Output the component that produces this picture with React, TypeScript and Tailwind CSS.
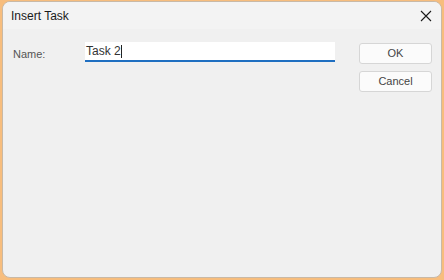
import React from "react";

export default function App() {
  return (
    <div className="w-[444px] h-[280px] bg-[#f7bd7d] pt-[1px] pl-[2px] pr-[2px] pb-[2px]" style={{ fontFamily: '"Liberation Sans", Arial, sans-serif' }}>
      <div className="w-full h-full rounded-[8px] border border-[#c9b9a6] bg-[#f0f0f0] flex flex-col overflow-hidden">
        <div className="h-[27px] flex items-center justify-between bg-[#f3f3f3] pl-[8px] pr-[8px]">
          <span className="text-[12px] text-[#1a1a1a]">Insert Task</span>
          <svg width="12" height="12" viewBox="0 0 12 12" className="mr-[1px]">
            <path d="M1 1 L11 11 M11 1 L1 11" stroke="#1a1a1a" strokeWidth="1.1" />
          </svg>
        </div>
        <div className="flex pl-[10px] pr-[9px] pt-[13px]">
          <div className="w-[72px] pt-[4px] text-[11px] text-[#555]">Name:</div>
          <div className="w-[250px] h-[20px] bg-white border-b-2 border-[#1f6fc1] flex items-center pl-[1px]">
            <span className="text-[12px] text-[#333]">Task 2</span>
            <span className="w-[1px] h-[13px] bg-[#222]"></span>
          </div>
          <div className="flex-1" />
          <div className="flex flex-col gap-[7px] pt-[1px]">
            <button className="w-[73px] h-[21px] rounded-[3px] border border-[#d6d6d6] bg-[#fbfbfb] text-[11px] text-[#444]">OK</button>
            <button className="w-[73px] h-[21px] rounded-[3px] border border-[#d6d6d6] bg-[#fbfbfb] text-[11px] text-[#444]">Cancel</button>
          </div>
        </div>
      </div>
    </div>
  );
}
